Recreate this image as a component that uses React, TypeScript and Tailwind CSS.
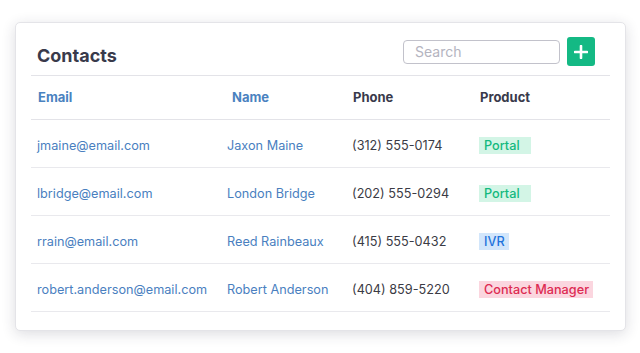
import React from 'react';

type Contact = {
  email: string;
  name: string;
  phone: string;
  product: string;
  badge: string;
};

const contacts: Contact[] = [
  { email: 'jmaine@email.com', name: 'Jaxon Maine', phone: '(312) 555-0174', product: 'Portal', badge: 'bg-[#d3f5e6] text-[#13b97e] min-w-[52px]' },
  { email: 'lbridge@email.com', name: 'London Bridge', phone: '(202) 555-0294', product: 'Portal', badge: 'bg-[#d3f5e6] text-[#13b97e] min-w-[52px]' },
  { email: 'rrain@email.com', name: 'Reed Rainbeaux', phone: '(415) 555-0432', product: 'IVR', badge: 'bg-[#d2e6fb] text-[#1f74dc]' },
  { email: 'robert.anderson@email.com', name: 'Robert Anderson', phone: '(404) 859-5220', product: 'Contact Manager', badge: 'bg-[#fbd6df] text-[#dd2b52]' },
];

export default function App() {
  return (
    <div className="w-[640px] h-[353px] bg-white pt-[22px] pl-[15px] font-['Inter','Noto_Sans',sans-serif]">
      <div className="w-[611px] h-[309px] bg-white rounded-[5px] border border-[#e4e4e8] shadow-[0_3px_14px_rgba(40,40,60,0.16)] px-[15px] pt-[14px]">
        {/* Card header */}
        <div className="flex items-end justify-between pl-[6px] pr-[15px] pb-[9px] border-b border-[#e3e3e8]">
          <h1 className="text-[18px] leading-[24px] font-bold text-[#393a4b] mb-[-2px]">Contacts</h1>
          <div className="flex items-center gap-[7px]">
            <input
              placeholder="Search"
              className="w-[157px] h-[24px] rounded-[4px] border border-[#c2c2cb] px-[11px] text-[14px] text-[#393a4b] placeholder:text-[#b4b4c0] outline-none"
            />
            <button className="w-[28px] h-[29px] rounded-[3px] bg-[#14b984] flex items-center justify-center">
              <svg width="14" height="14" viewBox="0 0 14 14">
                <path d="M7 1v12M1 7h12" stroke="white" strokeWidth="2.6" strokeLinecap="round" />
              </svg>
            </button>
          </div>
        </div>

        {/* Table */}
        <div className="grid grid-cols-[190px_125px_127px_1fr] h-[44px] items-center border-b border-[#e3e3e8] text-[13px] font-bold">
          <div className="pl-[7px] text-[#4a82c0]">Email</div>
          <div className="pl-[11px] text-[#4a82c0]">Name</div>
          <div className="pl-[7px] text-[#393a4b]">Phone</div>
          <div className="pl-[7px] text-[#393a4b]">Product</div>
        </div>
        {contacts.map((c) => (
          <div
            key={c.email}
            className="grid grid-cols-[190px_125px_127px_1fr] h-[48px] items-center border-b-[1.5px] border-[#e9e9ed] text-[12.7px]"
          >
            <div className="pl-[6px] pt-[5px] text-[#4a7fbf]">{c.email}</div>
            <div className="pl-[6px] pt-[5px] text-[#4a7fbf]">{c.name}</div>
            <div className="pl-[6px] pt-[5px] text-[#3b3b45]">{c.phone}</div>
            <div className="pl-[6px] pt-[5px]">
              <span className={`inline-block h-[17px] leading-[17px] pl-[5px] pr-[4px] font-medium ${c.badge}`}>
                {c.product}
              </span>
            </div>
          </div>
        ))}
      </div>
    </div>
  );
}
